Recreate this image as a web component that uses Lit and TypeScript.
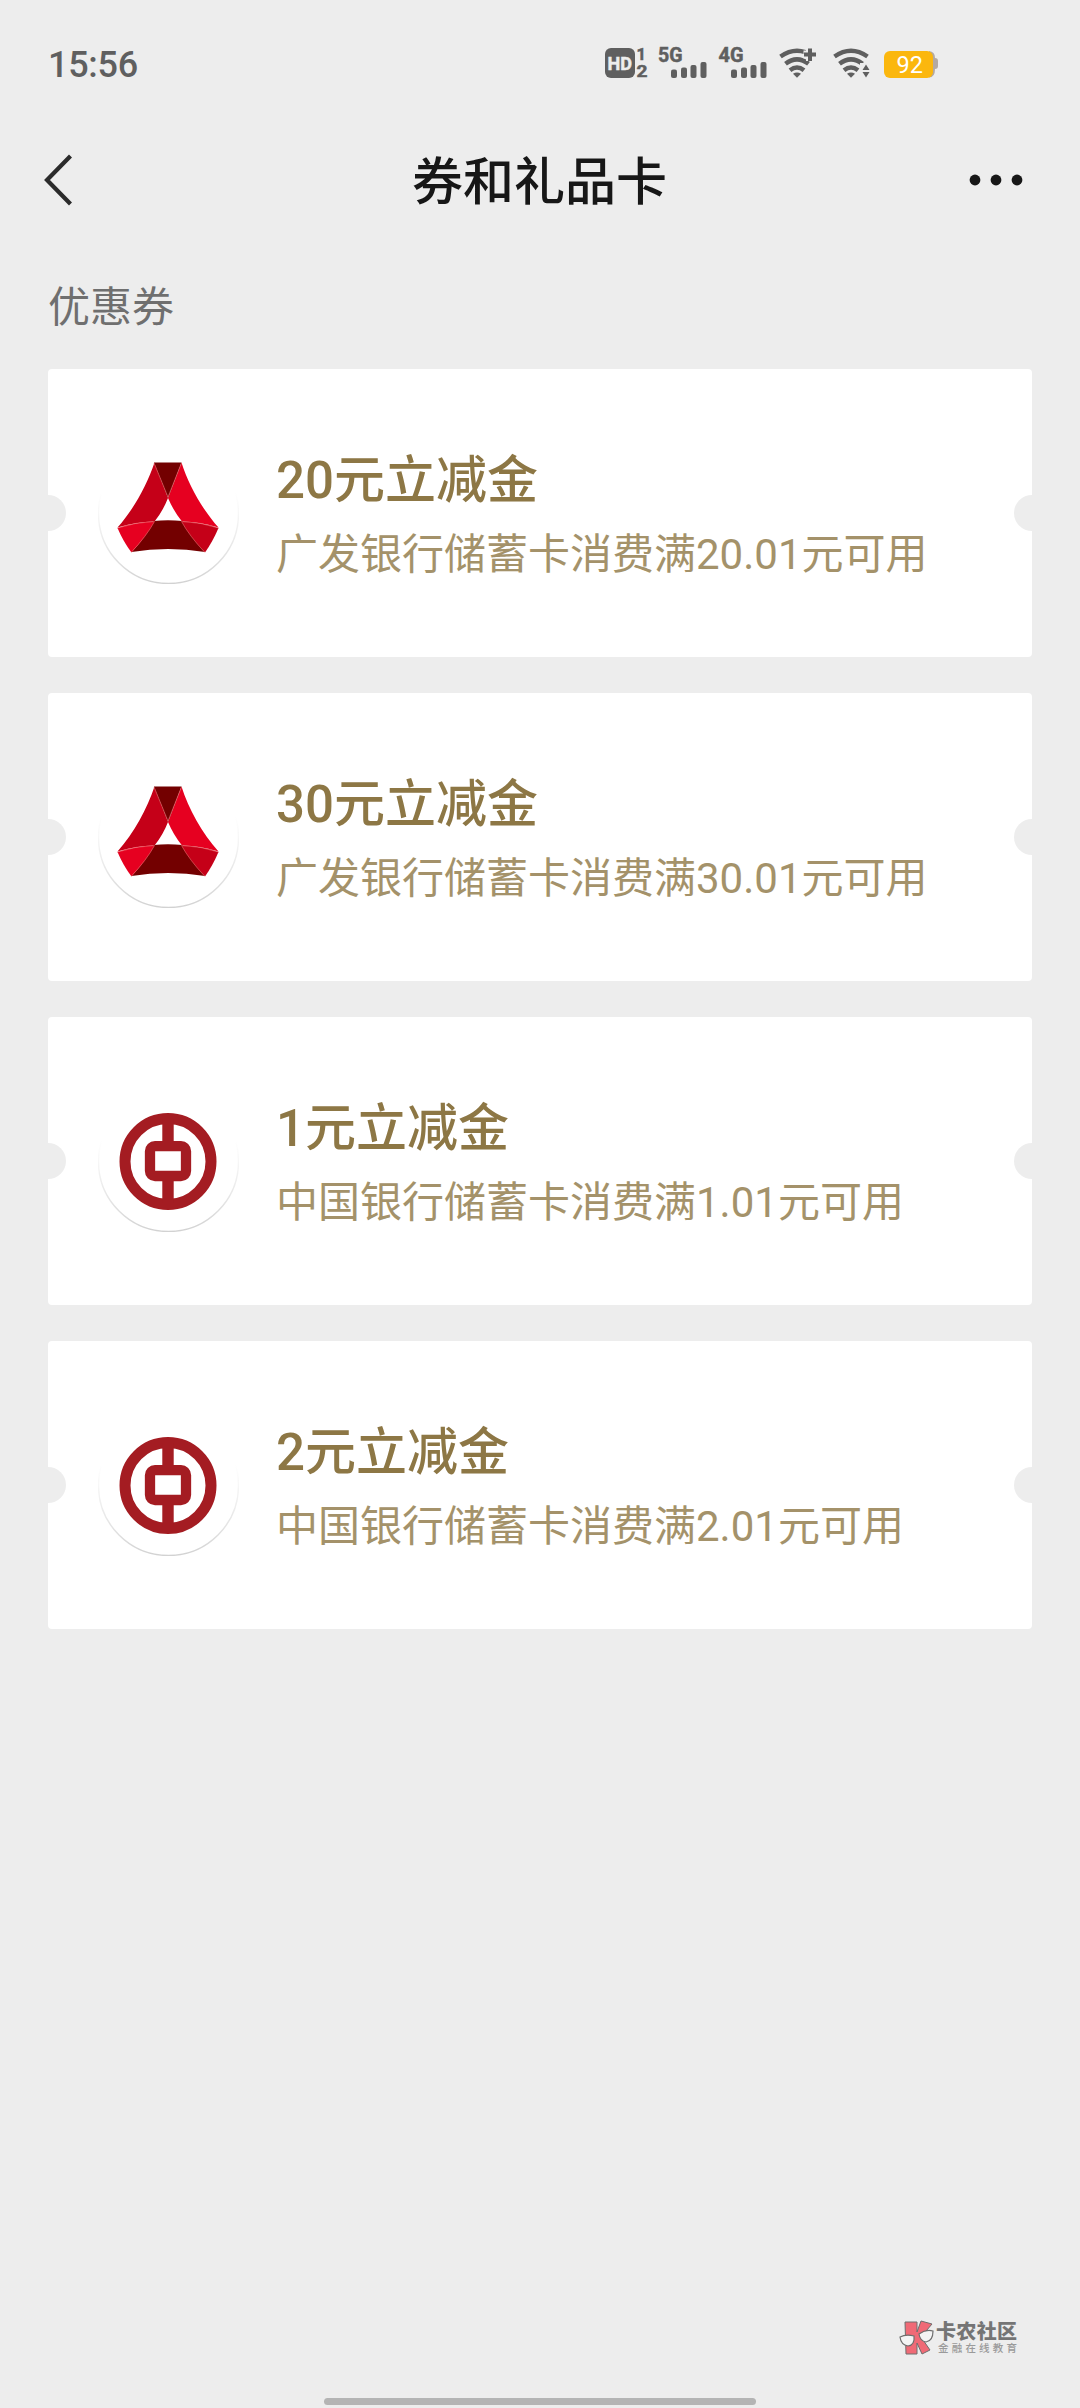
import { LitElement, html, css, svg } from "lit";
import { customElement, property } from "lit/decorators.js";

interface Coupon {
  bank: "cgb" | "boc";
  title: string;
  desc: string;
}

const COUPONS: Coupon[] = [
  { bank: "cgb", title: "20元立减金", desc: "广发银行储蓄卡消费满20.01元可用" },
  { bank: "cgb", title: "30元立减金", desc: "广发银行储蓄卡消费满30.01元可用" },
  { bank: "boc", title: "1元立减金", desc: "中国银行储蓄卡消费满1.01元可用" },
  { bank: "boc", title: "2元立减金", desc: "中国银行储蓄卡消费满2.01元可用" },
];

@customElement("bank-logo")
class BankLogo extends LitElement {
  @property() bank = "cgb";

  static styles = css`
    :host {
      display: block;
      width: 141px;
      height: 141px;
    }
    .logo {
      display: block;
    }
  `;

  private cgb() {
    return svg`
      <path d="M56.5 19.5 C49 42 36 66 19.5 84.5 Q38 79 56.5 78.5 Q65 68 70 55 Z" fill="#c50018"/>
      <path d="M83.500 19.5 C90.500 42 104 66 120.500 84.5 Q102.500 79 84 78.5 Q75.500 68 70 55 Z" fill="#e60020"/>
      <path d="M56 19.5 H83.500 L70 55 Z" fill="#730000"/>
      <path d="M55.500 78 Q70 76.5 84.500 78 Q92.500 92 107 109 Q70 103 33.500 109 Q46.500 95 55.500 78 Z" fill="#730000"/>
      <path d="M19.500 85 Q38 79 56.500 78.5 Q48.500 93 33.500 109.5 Q25.500 99 19.500 85 Z" fill="#e60020"/>
      <path d="M120.500 85 Q102.500 79 83.500 78.5 Q91.500 93 107 109.5 Q114.500 99 120.500 85 Z" fill="#c50018"/>
      <path d="M19.500 85 Q38 79 56.500 78.5 Q48.500 93 33.500 109 M120.500 85 Q102.500 79 83.500 78.5 Q91.500 93 106.500 109 M56 20 L70 54 L83.500 20" fill="none" stroke="#ef6d70" stroke-width="0.6"/>`;
  }

  private boc() {
    return svg`
      <circle cx="70" cy="70.5" r="43" fill="none" stroke="#a41c22" stroke-width="11"/>
      <path d="M64.300 28 h11.4 v24 h-11.4 Z M64.300 88 h11.4 v24 h-11.4 Z" fill="#a41c22"/>
      <rect x="52" y="55.2" width="36" height="29.8" rx="5" fill="none" stroke="#a41c22" stroke-width="10.3"/>`;
  }

  render() {
    return html`<svg class="logo" width="141" height="141" viewBox="0 0 141 141">
      <defs>
        <linearGradient id="rim" x1="0" y1="0" x2="0" y2="1">
          <stop offset="0.35" stop-color="#dedede" stop-opacity="0" />
          <stop offset="1" stop-color="#d2d2d2" />
        </linearGradient>
      </defs>
      <circle cx="70.5" cy="70.5" r="70" fill="#fff" stroke="url(#rim)" stroke-width="1.4" />
      ${this.bank === "cgb" ? this.cgb() : this.boc()}
    </svg>`;
  }
}

@customElement("coupon-card")
class CouponCard extends LitElement {
  @property({ attribute: false }) coupon!: Coupon;

  static styles = css`
    :host {
      display: block;
    }
    .card {
      position: relative;
      box-sizing: border-box;
      height: 288px;
      padding: 0 50px;
      display: flex;
      align-items: center;
      gap: 37px;
      background: #fff;
      border-radius: 4px;
      overflow: hidden;
    }
    .notch {
      position: absolute;
      top: 126px;
      width: 36px;
      height: 36px;
      border-radius: 50%;
      background: #ededed;
    }
    .left {
      left: -18px;
    }
    .right {
      right: -18px;
    }
    .text {
      display: flex;
      flex-direction: column;
      gap: 5px;
      padding-top: 7px;
      white-space: nowrap;
    }
    .title {
      font-size: 51px;
      line-height: 72px;
      font-weight: 500;
      color: #8d7745;
    }
    .desc {
      font-size: 42px;
      line-height: 66px;
      color: #a4926a;
    }
  `;

  render() {
    return html`<div class="card">
      <span class="notch left"></span>
      <span class="notch right"></span>
      <bank-logo .bank=${this.coupon.bank}></bank-logo>
      <div class="text">
        <div class="title">${this.coupon.title}</div>
        <div class="desc">${this.coupon.desc}</div>
      </div>
    </div>`;
  }
}

@customElement("status-bar")
class StatusBar extends LitElement {
  static styles = css`
    :host {
      display: block;
    }
    .bar {
      height: 126px;
      box-sizing: border-box;
      padding: 4px 141px 0 48px;
      display: flex;
      align-items: center;
      justify-content: space-between;
    }
    .time {
      font-size: 36px;
      line-height: 42px;
      font-weight: 500;
      color: #5f5f5f;
      letter-spacing: -0.3px;
    }
    .icons {
      display: block;
      margin-top: -4px;
    }
    .label {
      font-family: Roboto, sans-serif;
      font-weight: 700;
      fill: #5f5f5f;
      stroke: #5f5f5f;
      stroke-width: 0.5px;
    }
    .level {
      font-family: Roboto, sans-serif;
      fill: #fff;
    }
    .hd {
      fill: #ededed;
      stroke: #ededed;
    }
  `;

  private signal(x: number) {
    return svg`<g fill="#5f5f5f">
      <rect x=${x} y="69.5" width="6" height="8.5" rx="2"/>
      <rect x=${x + 10} y="67.5" width="6" height="10.5" rx="2"/>
      <rect x=${x + 19.5} y="65" width="6" height="13" rx="2"/>
      <rect x=${x + 29.5} y="62" width="6" height="16" rx="2"/>
    </g>`;
  }

  private wifi(x: number) {
    return svg`<g fill="none" stroke="#5f5f5f" stroke-width="4.500">
      <path d=${`M${x - 16.5} 56.5 Q${x} 45 ${x + 16.5} 56.5`}/>
      <path d=${`M${x - 11.5} 63.8 Q${x} 55 ${x + 11.5} 63.8`}/>
      <path d=${`M${x - 7} 70.3 Q${x} 64.800 ${x + 7} 70.3`}/>
      <path d=${`M${x - 4} 73.8 Q${x} 71 ${x + 4} 73.8 L${x} 77.8 Z`} fill="#5f5f5f" stroke="none"/>
    </g>`;
  }

  render() {
    return html`<div class="bar">
      <span class="time">15:56</span>
      <svg class="icons" width="336" height="36" viewBox="604 45 336 36">
        <rect x="606" y="48" width="30" height="30" rx="6" fill="#5f5f5f" />
        <text class="label hd" x="608.500" y="70" font-size="19" textLength="24.500" lengthAdjust="spacingAndGlyphs">HD</text>
        <text class="label" x="637.500" y="59.500" font-size="16.500">1</text>
        <text class="label" x="637.500" y="77" font-size="16.500" textLength="11" lengthAdjust="spacingAndGlyphs">2</text>
        <text class="label" x="659" y="62.3" font-size="19.5" textLength="24.5" lengthAdjust="spacingAndGlyphs">5G</text>
        ${this.signal(672)}
        <text class="label" x="719.5" y="62.3" font-size="19.5" textLength="25" lengthAdjust="spacingAndGlyphs">4G</text>
        ${this.signal(732)}
        ${this.wifi(798)}
        <path d="M811 48 V61 M804.5 54.5 H817.5" stroke="#ededed" stroke-width="8" />
        <path d="M811 48.5 V61 M805 54.5 H817" stroke="#5f5f5f" stroke-width="4" />
        ${this.wifi(852)}
        <path d="M861 63 H872 V78 H861 Z" fill="#ededed" />
        <path d="M863.5 70 L867 64.5 L870.5 70 Z M863.5 72 L867 77.5 L870.5 72 Z" fill="#5f5f5f" />
        <path d="M930 51 q6 0.5 6 7 q3 0 3 3 v5 q0 3 -3 3 q0 8.500 -6 8.500 Z" fill="#b3a9a2" />
        <rect x="885" y="51" width="49" height="27" rx="6" fill="#fbb70e" />
        <text class="level" x="897.500" y="73" font-size="23.500">92</text>
      </svg>
    </div>`;
  }
}

@customElement("app-root")
class AppRoot extends LitElement {
  static styles = css`
    :host {
      display: block;
      font-family: Roboto, "Noto Sans CJK SC", sans-serif;
    }
    .page {
      width: 1080px;
      height: 2408px;
      box-sizing: border-box;
      background: #ededed;
      display: flex;
      flex-direction: column;
    }
    .nav {
      height: 108px;
      padding: 0 56px 0 44px;
      display: grid;
      grid-template-columns: 56px 1fr 56px;
      align-items: center;
      flex: none;
    }
    .nav-title {
      text-align: center;
      font-size: 51px;
      line-height: 72px;
      font-weight: 500;
      color: #171717;
      padding: 5px 0 0 11px;
    }
    .section {
      height: 135px;
      flex: none;
      box-sizing: border-box;
      padding: 4px 48px 0;
      display: flex;
      align-items: center;
      font-size: 42px;
      color: #6f6f6f;
    }
    .list {
      padding: 0 48px;
      display: flex;
      flex-direction: column;
      gap: 36px;
    }
    .footer {
      margin-top: auto;
      display: flex;
      flex-direction: column;
    }
    .brand {
      display: flex;
      align-self: flex-end;
      align-items: center;
      gap: 2px;
      margin-right: 62px;
      height: 36px;
    }
    .brand-text {
      display: block;
    }
    .brand-name {
      font-weight: 900;
      fill: #757575;
    }
    .brand-sub {
      font-weight: 500;
      fill: #9a9a9a;
    }
    .home {
      align-self: center;
      width: 432px;
      height: 7px;
      border-radius: 4px;
      background: #b4b4b4;
      margin: 42px 0 3px;
    }
  `;

  render() {
    return html`<div class="page">
      <status-bar></status-bar>
      <div class="nav">
        <svg width="30" height="52" viewBox="44 154 30 52">
          <path d="M70.500 156 L47 180 L70.500 204" fill="none" stroke="#2b2b2b" stroke-width="4.200" />
        </svg>
        <div class="nav-title">券和礼品卡</div>
        <svg width="56" height="14" viewBox="968 173 56 14">
          <g fill="#171717">
            <circle cx="975" cy="180" r="5.400" />
            <circle cx="996" cy="180" r="5.400" />
            <circle cx="1017" cy="180" r="5.400" />
          </g>
        </svg>
      </div>
      <div class="section">优惠券</div>
      <div class="list">
        ${COUPONS.map((c) => html`<coupon-card .coupon=${c}></coupon-card>`)}
      </div>
      <div class="footer">
        <div class="brand">
          <svg width="35" height="36" viewBox="0 0 35 36">
            <path d="M6 2 H18 V12 L22 1 L33 4 L22 17 L31 30 L23 34 L18 23 V34 H7 Z" fill="#f06a76" stroke="#6e6e6e" stroke-width="1" />
            <path d="M1 17 Q7 14 15 16 Q16 25 9 26 Q2 25 1 17 Z M20 14 Q27 9 34 11 Q34 21 27 22 Q21 21 20 14 Z" fill="#f4f4f4" stroke="#6e6e6e" stroke-width="1.200" />
          </svg>
          <svg class="brand-text" width="82" height="36" viewBox="0 0 82 36">
            <text class="brand-name" x="0" y="19" font-size="20" textLength="81">卡农社区</text>
            <text class="brand-sub" x="2" y="32" font-size="10.500" textLength="79">金融在线教育</text>
          </svg>
        </div>
        <div class="home"></div>
      </div>
    </div>`;
  }
}
